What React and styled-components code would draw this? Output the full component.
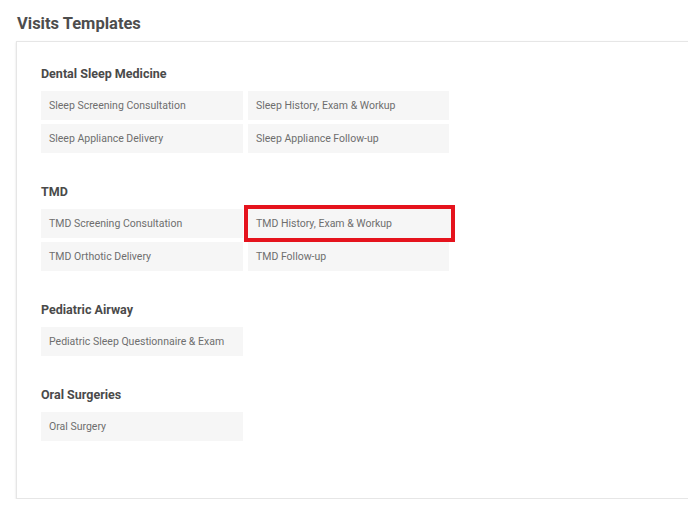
import styled, { createGlobalStyle } from "styled-components";

const GlobalStyle = createGlobalStyle`
    html, body {
        margin: 0;
        padding: 0;
        background: #ffffff;
        overflow: hidden;
    }
    body {
        font-family: Roboto, "Liberation Sans", sans-serif;
    }
`;

const sections = [
    {
        title: "Dental Sleep Medicine",
        items: [
            "Sleep Screening Consultation",
            "Sleep History, Exam & Workup",
            "Sleep Appliance Delivery",
            "Sleep Appliance Follow-up",
        ],
    },
    {
        title: "TMD",
        items: [
            "TMD Screening Consultation",
            "TMD History, Exam & Workup",
            "TMD Orthotic Delivery",
            "TMD Follow-up",
        ],
        highlight: "TMD History, Exam & Workup",
    },
    {
        title: "Pediatric Airway",
        items: ["Pediatric Sleep Questionnaire & Exam"],
    },
    {
        title: "Oral Surgeries",
        items: ["Oral Surgery"],
    },
];

export default function App() {
    return (
        <Page>
            <GlobalStyle />
            <Title>Visits Templates</Title>
            <Card>
                {sections.map((s) => (
                    <Section key={s.title}>
                        <Heading>{s.title}</Heading>
                        <Grid>
                            {s.items.map((item) => (
                                <Tile key={item} $highlight={item === s.highlight}>
                                    {item}
                                </Tile>
                            ))}
                        </Grid>
                    </Section>
                ))}
            </Card>
        </Page>
    );
}

const Page = styled.div`
    padding: 14px 0 0 16px;
    width: 720px;
`;

const Title = styled.div`
    font-family: Roboto, "Liberation Sans", sans-serif;
    font-size: 16.5px;
    font-weight: 700;
    line-height: 20px;
    color: #4d4d4d;
    margin-left: 1px;
    margin-bottom: 7px;
`;

const Card = styled.div`
    border: 1px solid #e6e6e6;
    border-right: none;
    box-shadow: 0 1px 2px rgba(0, 0, 0, 0.12);
    background: #ffffff;
    padding: 23px 0 57px 24px;
    display: flex;
    flex-direction: column;
    gap: 30px;
`;

const Section = styled.div`
    display: flex;
    flex-direction: column;
`;

const Heading = styled.div`
    font-family: Roboto, "Liberation Sans", sans-serif;
    font-size: 12.5px;
    font-weight: 700;
    line-height: 17px;
    color: #4a4a4a;
    margin-bottom: 9px;
`;

const Grid = styled.div`
    display: grid;
    grid-template-columns: 202px 201px;
    column-gap: 5px;
    row-gap: 4px;
`;

const Tile = styled.div`
    height: 29px;
    display: flex;
    align-items: center;
    padding-left: 8px;
    background: #f6f6f6;
    font-family: Roboto, "Liberation Sans", sans-serif;
    font-size: 10.5px;
    color: #6e6e6e;
    outline: ${(p) => (p.$highlight ? "4px solid #e5131d" : "none")};
    margin: ${(p) => (p.$highlight ? "0 -2px 0 0" : "0")};
`;
